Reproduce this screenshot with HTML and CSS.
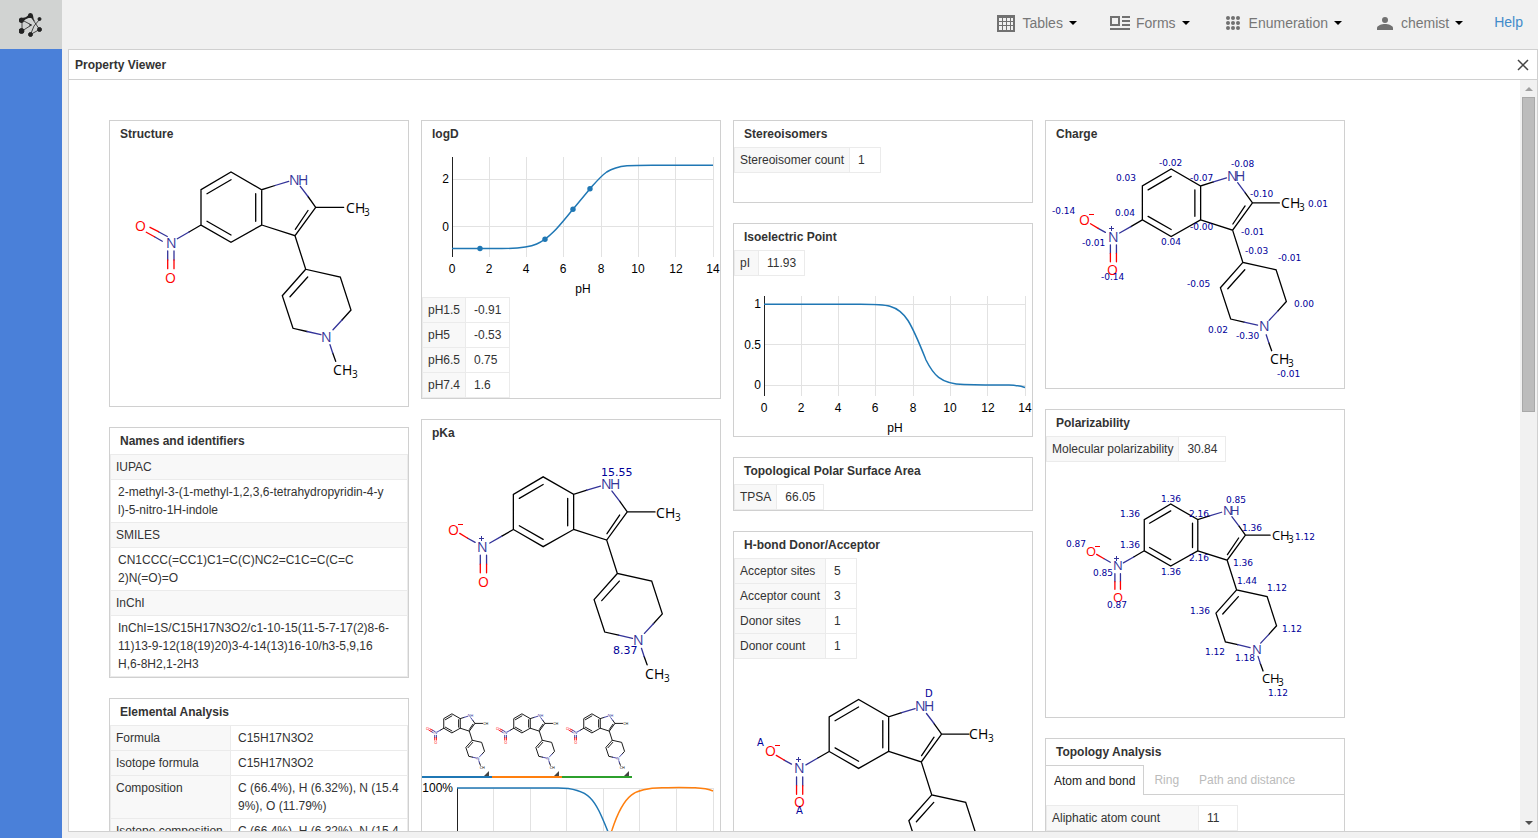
FILE: index.html
```html
<!DOCTYPE html>
<html lang="en">

<head>
    <meta charset="UTF-8">
    <meta name="viewport" content="width=device-width, initial-scale=1.0">
    <title>Property Viewer</title>
    <link rel="stylesheet" href="styles.css">
</head>

<body>
    <!-- shared molecule bonds -->
    <svg class="defs" width="0" height="0" aria-hidden="true">
        <defs>
            <g id="rings">
                <path class="bond" d="M165 38.5L151.700 42.700L121 25L91 42.700V78L121 95.300L151.700 78V42.700M121 32.700L97 46.700M97 74.300L121 88M145.700 46.700V74.300M151.700 78L185 88.700L205.700 60.300H233.700M205.700 60.300L198 49.500M185.300 82.300L198 63.500M185 88.700L195.700 122.300L230.300 130L241 163L232 173M195.700 122.300L172.300 148.700L183 181.300L197 184.500M197.700 130L180 149.700M222.700 206L225.700 214.300M91 78L79 85" />
                <path class="bond blue" d="M165 38.500L178.700 34.300M198 49.500L190.300 39.300M232 173L223 182.700M197 184.500L211 187.700M220 197.700L222.700 206M79 85L67.300 91.700" />
                <path class="bond blue" d="M57.700 104V113M64 104V113" />
                <path class="bond red" d="M57.700 113V121.700M64 113V121.700" />
            </g>
            <g id="oxo">
                <path class="bond blue" d="M48.500 84.700L57.300 89.500M44.500 89.800L52.300 94.300" />
                <path class="bond red" d="M40 80.300L48.500 84.700M36.300 85.300L44.500 89.800" />
            </g>
            <g id="oxide">
                <path class="bond blue" d="M45 86.800L52.500 91" />
                <path class="bond red" d="M37 82L45 86.800" />
            </g>
            <g id="small">
                <use href="#rings" />
                <use href="#oxo" />
                <g class="atom">
                    <text class="blue" x="179" y="38">NH</text>
                    <text x="236" y="66">CH</text>
                    <text class="red" x="26" y="84">O</text>
                    <text class="blue" x="56" y="101">N</text>
                    <text class="red" x="56" y="136">O</text>
                    <text class="blue" x="211" y="195">N</text>
                    <text x="223" y="228">CH</text>
                </g>
            </g>
        </defs>
    </svg>

    <div class="app">
        <aside class="sidebar">
            <a class="logo" href="#">
                <svg width="24" height="24" viewBox="0 0 24 24" fill="#222" stroke="#222">
                    <path fill="none" stroke-width="0.8" d="M3 7L11.500 3L20.500 16.500L11.500 21.500M20.500 6.500L15 13L11.500 21.500M3 7L12.500 12L3 18V7" />
                    <path stroke="none" d="M9 2.500a2.500 2.500 0 0 1 5 0q0 3 2.500 6.500l-4-4L9.500 5Q6 6 5.200 7.500A2.700 2.700 0 1 1 2.500 4.500Q6 5.500 9 2.500zM9.500 10.500L13 12l-3.500 1.500 1.500-1.500z" />
                    <circle cx="2.500" cy="18" r="2.500" /><circle cx="20.500" cy="6" r="1.500" /><circle cx="20.500" cy="16.500" r="2" /><circle cx="11.500" cy="21.500" r="2" />
                </svg>
            </a>
        </aside>

        <div class="content">
            <nav class="topbar">
                <button class="menu" type="button">
                    <svg class="icon" viewBox="0 0 24 24"><path fill-rule="evenodd" d="M3 4h18v17H3zM5 7v3h3V7zM9 7v3h3V7zM13 7v3h3V7zM17 7v3h2V7zM5 11v3h3v-3zM9 11v3h3v-3zM13 11v3h3v-3zM17 11v3h2v-3zM5 15v4h3v-4zM9 15v4h3v-4zM13 15v4h3v-4zM17 15v4h2v-4z" /></svg>
                    <span>Tables</span><i class="caret"></i>
                </button>
                <button class="menu" type="button">
                    <svg class="icon" viewBox="0 0 24 24"><path fill-rule="evenodd" d="M2 5h10v10H2zM4 7v6h6V7zM14 5h8v2h-8zM14 9h8v2h-8zM14 13h8v2h-8zM2 17h20v2H2z" /></svg>
                    <span>Forms</span><i class="caret"></i>
                </button>
                <button class="menu" type="button">
                    <svg class="icon" viewBox="0 0 24 24">
                        <circle cx="7" cy="7" r="2" /><circle cx="12" cy="7" r="2" /><circle cx="17" cy="7" r="2" />
                        <circle cx="7" cy="12" r="2" /><circle cx="12" cy="12" r="2" /><circle cx="17" cy="12" r="2" />
                        <circle cx="7" cy="17" r="2" /><circle cx="12" cy="17" r="2" /><circle cx="17" cy="17" r="2" />
                    </svg>
                    <span>Enumeration</span><i class="caret"></i>
                </button>
                <button class="menu" type="button">
                    <svg class="icon" viewBox="0 0 24 24"><circle cx="12" cy="9" r="3" /><path d="M4 19v-2c0-2.500 5-4 8-4s8 1.500 8 4v2z" /></svg>
                    <span>chemist</span><i class="caret"></i>
                </button>
                <a class="help" href="#">Help</a>
            </nav>

            <main class="panel">
                <header class="panel-head">
                    <h1>Property Viewer</h1>
                    <button class="close" type="button">
                        <svg width="12" height="12" viewBox="0 0 12 12"><path d="M1 1L11 11M11 1L1 11" /></svg>
                    </button>
                </header>
                <div class="panel-body">
                    <div class="columns">

                        <div class="column">
                            <section class="card">
                                <h2>Structure</h2>
                                <svg class="drawing" height="259">
                                    <use href="#rings" />
                                    <use href="#oxo" />
                                    <g class="atom">
                                        <text class="blue" y="38"><tspan x="179">N</tspan><tspan x="188">H</tspan></text>
                                        <text y="66"><tspan x="236">C</tspan><tspan x="245">H</tspan><tspan class="sub" x="254" y="69">3</tspan></text>
                                        <text class="red" x="25" y="84">O</text>
                                        <text class="blue" x="56" y="101">N</text>
                                        <text class="red" x="55" y="136">O</text>
                                        <text class="blue" x="211" y="195">N</text>
                                        <text y="228"><tspan x="223">C</tspan><tspan x="232">H</tspan><tspan class="sub" x="242" y="231">3</tspan></text>
                                    </g>
                                </svg>
                            </section>

                            <section class="card">
                                <h2>Names and identifiers</h2>
                                <table class="wide">
                                    <tr><th>IUPAC</th></tr>
                                    <tr><td>2-methyl-3-(1-methyl-1,2,3,6-tetrahydropyridin-4-y<br>l)-5-nitro-1H-indole</td></tr>
                                    <tr><th>SMILES</th></tr>
                                    <tr><td>CN1CCC(=CC1)C1=C(C)NC2=C1C=C(C=C<br>2)N(=O)=O</td></tr>
                                    <tr><th>InChI</th></tr>
                                    <tr><td>InChI=1S/C15H17N3O2/c1-10-15(11-5-7-17(2)8-6-<br>11)13-9-12(18(19)20)3-4-14(13)16-10/h3-5,9,16<br>H,6-8H2,1-2H3</td></tr>
                                </table>
                            </section>

                            <section class="card">
                                <h2>Elemental Analysis</h2>
                                <table class="wide">
                                    <tr><th class="name">Formula</th><td>C15H17N3O2</td></tr>
                                    <tr><th class="name">Isotope formula</th><td>C15H17N3O2</td></tr>
                                    <tr><th class="name">Composition</th><td>C (66.4%), H (6.32%), N (15.4<br>9%), O (11.79%)</td></tr>
                                    <tr><th class="name">Isotope composition</th><td>C (66.4%), H (6.32%), N (15.4<br>9%), O (11.79%)</td></tr>
                                </table>
                            </section>
                        </div>

                        <div class="column">
                            <section class="card">
                                <h2>logD</h2>
                                <svg class="drawing chart" height="150">
                                    <path class="grid" d="M67.500 10V110M104.500 10V110M141.500 10V110M179.500 10V110M216.500 10V110M253.500 10V110M291.500 10V110M30 32.500H291M30 79.500H291" />
                                    <path class="axis" d="M30.500 10V110" />
                                    <path class="line" d="M30 101.500H80C95 101.500 106 101 114.700 97C129 91 141 74 151 62.300L168 41.700C174 35 179 29 184.700 25C191 21 198 19.500 205 18.800C212 18.300 220 18.300 230 18.300H291" />
                                    <g class="dots"><circle cx="58" cy="101.500" r="2.700" /><circle cx="123" cy="92.300" r="2.700" /><circle cx="151" cy="62.300" r="2.700" /><circle cx="168" cy="41.700" r="2.700" /></g>
                                    <g class="ylabels"><text x="27" y="36">2</text><text x="27" y="84">0</text></g>
                                    <g class="xlabels">
                                        <text x="30" y="126">0</text><text x="67" y="126">2</text><text x="104" y="126">4</text><text x="141" y="126">6</text><text x="179" y="126">8</text><text x="216" y="126">10</text><text x="254" y="126">12</text><text x="291" y="126">14</text>
                                        <text x="161" y="146">pH</text>
                                    </g>
                                </svg>
                                <table>
                                    <tr><th>pH1.5</th><td>-0.91</td></tr>
                                    <tr><th>pH5</th><td>-0.53</td></tr>
                                    <tr><th>pH6.5</th><td>0.75</td></tr>
                                    <tr><th>pH7.4</th><td>1.6</td></tr>
                                </table>
                            </section>

                            <section class="card">
                                <h2>pKa</h2>
                                <svg class="drawing" height="254">
                                    <g transform="translate(1 6) scale(.993)"><use href="#rings" /><use href="#oxide" /></g>
                                    <g class="atom">
                                        <text class="blue" y="43"><tspan x="179">N</tspan><tspan x="188">H</tspan></text>
                                        <text y="72"><tspan x="234">C</tspan><tspan x="243">H</tspan><tspan class="sub" x="253" y="75">3</tspan></text>
                                        <text class="red" x="26" y="89">O</text>
                                        <text class="blue" x="55" y="106">N</text>
                                        <text class="red" x="56" y="141">O</text>
                                        <text class="blue" x="211" y="199">N</text>
                                        <text y="233"><tspan x="223">C</tspan><tspan x="232">H</tspan><tspan class="sub" x="242" y="236">3</tspan></text>
                                    </g>
                                    <path class="sign red" d="M36 78.500H41" />
                                    <path class="sign blue" d="M57 92.500H62M59.500 90V95" />
                                    <g class="value large"><text x="179" y="30">15.55</text><text x="191" y="208">8.37</text></g>
                                </svg>
                                <ul class="species">
                                    <li class="s-blue"><svg width="70" height="76"><use href="#small" transform="translate(-3 7) scale(.272)" /><path class="corner" d="M67 71V76H62z" /></svg></li>
                                    <li class="s-orange"><svg width="70" height="76"><use href="#small" transform="translate(-3 7) scale(.272)" /><path class="corner" d="M67 71V76H62z" /></svg></li>
                                    <li class="s-green"><svg width="70" height="76"><use href="#small" transform="translate(-3 7) scale(.272)" /><path class="corner" d="M67 71V76H62z" /></svg></li>
                                </ul>
                                <svg class="drawing chart" height="120">
                                    <path class="grid" d="M71.500 10V110M108.500 10V110M144.500 10V110M181.500 10V110M217.500 10V110M254.500 10V110M291.500 10V110M35 10.500H291" />
                                    <path class="axis" d="M35.500 10V110" />
                                    <path class="line" d="M35 10H136C168 10 173 22 185.300 52C192 72 198 108 215 109H291" />
                                    <path class="line orange" d="M35 109H150C175 109 180 75 190 52C202 15 213 10 240 9.700C265 9.500 281 9 291 13" />
                                    <g class="ylabels"><text x="31" y="14">100%</text></g>
                                </svg>
                            </section>
                        </div>

                        <div class="column">
                            <section class="card spare">
                                <h2>Stereoisomers</h2>
                                <table>
                                    <tr><th>Stereoisomer count</th><td>1</td></tr>
                                </table>
                            </section>

                            <section class="card">
                                <h2>Isoelectric Point</h2>
                                <table>
                                    <tr><th>pI</th><td>11.93</td></tr>
                                </table>
                                <svg class="drawing chart" height="160">
                                    <path class="grid" d="M67.500 20V120M104.500 20V120M141.500 20V120M179.500 20V120M216.500 20V120M253.500 20V120M291.500 20V120M30 28.500H291M30 68.500H291M30 109.500H291" />
                                    <path class="axis" d="M30.500 20V120" />
                                    <path class="line" d="M30 28.300H125C152 28.300 163 28 174 44.500C181 56 186 69 192 84C199 98 206 108 230 108.500C250 109 265 109 275 109C284 109.500 288 110.500 291 111.500" />
                                    <g class="ylabels"><text x="27" y="32">1</text><text x="27" y="73">0.5</text><text x="27" y="113">0</text></g>
                                    <g class="xlabels">
                                        <text x="30" y="136">0</text><text x="67" y="136">2</text><text x="104" y="136">4</text><text x="141" y="136">6</text><text x="179" y="136">8</text><text x="216" y="136">10</text><text x="254" y="136">12</text><text x="291" y="136">14</text>
                                        <text x="161" y="156">pH</text>
                                    </g>
                                </svg>
                            </section>

                            <section class="card">
                                <h2>Topological Polar Surface Area</h2>
                                <table>
                                    <tr><th>TPSA</th><td>66.05</td></tr>
                                </table>
                            </section>

                            <section class="card">
                                <h2>H-bond Donor/Acceptor</h2>
                                <table>
                                    <tr><th>Acceptor sites</th><td>5</td></tr>
                                    <tr><th>Acceptor count</th><td>3</td></tr>
                                    <tr><th>Donor sites</th><td>1</td></tr>
                                    <tr><th>Donor count</th><td>1</td></tr>
                                </table>
                                <svg class="drawing" height="270">
                                    <g transform="translate(6 16) scale(.98)"><use href="#rings" /><use href="#oxide" /></g>
                                    <g class="atom">
                                        <text class="blue" y="52"><tspan x="181">N</tspan><tspan x="190">H</tspan></text>
                                        <text y="80"><tspan x="235">C</tspan><tspan x="244">H</tspan><tspan class="sub" x="254" y="83">3</tspan></text>
                                        <text class="red" x="31" y="97">O</text>
                                        <text class="blue" x="60" y="114">N</text>
                                        <text class="red" x="60" y="148">O</text>
                                        <text class="blue" x="213" y="206">N</text>
                                        <text y="239"><tspan x="225">C</tspan><tspan x="234">H</tspan><tspan class="sub" x="244" y="242">3</tspan></text>
                                    </g>
                                    <path class="sign red" d="M41 86.500H46" />
                                    <path class="sign blue" d="M62 100.500H67M64.500 98V103" />
                                    <g class="value letter"><text x="191" y="38">D</text><text x="23" y="87">A</text><text x="62" y="155">A</text></g>
                                </svg>
                            </section>
                        </div>

                        <div class="column">
                            <section class="card">
                                <h2>Charge</h2>
                                <svg class="drawing" height="241">
                                    <g transform="translate(9 -2) scale(.96)"><use href="#rings" /><use href="#oxide" /></g>
                                    <g class="atom">
                                        <text class="blue" y="34"><tspan x="181">N</tspan><tspan x="189">H</tspan></text>
                                        <text y="61"><tspan x="235">C</tspan><tspan x="244">H</tspan><tspan class="sub" x="253" y="64">3</tspan></text>
                                        <text class="red" x="33" y="78">O</text>
                                        <text class="blue" x="62" y="95">N</text>
                                        <text class="red" x="61" y="128">O</text>
                                        <text class="blue" x="213" y="184">N</text>
                                        <text y="217"><tspan x="224">C</tspan><tspan x="233">H</tspan><tspan class="sub" x="242" y="220">3</tspan></text>
                                    </g>
                                    <path class="sign red" d="M43 67.500H48" />
                                    <path class="sign blue" d="M63 81.500H68M65.500 79V84" />
                                    <g class="value">
                                        <text x="113" y="19">-0.02</text><text x="185" y="20">-0.08</text><text x="70" y="34">0.03</text><text x="144" y="34">-0.07</text>
                                        <text x="204" y="50">-0.10</text><text x="262" y="60">0.01</text><text x="6" y="67">-0.14</text><text x="69" y="69">0.04</text>
                                        <text x="144" y="83">-0.00</text><text x="195" y="88">-0.01</text><text x="115" y="98">0.04</text><text x="36" y="99">-0.01</text>
                                        <text x="199" y="107">-0.03</text><text x="232" y="114">-0.01</text><text x="55" y="133">-0.14</text><text x="141" y="140">-0.05</text>
                                        <text x="248" y="160">0.00</text><text x="162" y="186">0.02</text><text x="190" y="192">-0.30</text><text x="231" y="230">-0.01</text>
                                    </g>
                                </svg>
                            </section>

                            <section class="card">
                                <h2>Polarizability</h2>
                                <table>
                                    <tr><th>Molecular polarizability</th><td>30.84</td></tr>
                                </table>
                                <svg class="drawing" height="255">
                                    <g transform="translate(18 20) scale(.882)"><use href="#rings" /><use href="#oxide" /></g>
                                    <g class="atom compact">
                                        <text class="blue" y="53"><tspan x="177">N</tspan><tspan x="184">H</tspan></text>
                                        <text y="78"><tspan x="226">C</tspan><tspan x="234">H</tspan><tspan class="sub" x="242" y="81">3</tspan></text>
                                        <text class="red" x="40" y="94">O</text>
                                        <text class="blue" x="67" y="108">N</text>
                                        <text class="red" x="67" y="140">O</text>
                                        <text class="blue" x="206" y="192">N</text>
                                        <text y="221"><tspan x="216">C</tspan><tspan x="224">H</tspan><tspan class="sub" x="232" y="224">3</tspan></text>
                                    </g>
                                    <path class="sign red" d="M49 84.500H54" />
                                    <path class="sign blue" d="M68 96.500H73M70.500 94V99" />
                                    <g class="value">
                                        <text x="115" y="40">1.36</text><text x="180" y="41">0.85</text><text x="74" y="55">1.36</text><text x="143" y="55">2.16</text>
                                        <text x="196" y="69">1.36</text><text x="249" y="78">1.12</text><text x="20" y="85">0.87</text><text x="74" y="86">1.36</text>
                                        <text x="143" y="99">2.16</text><text x="187" y="104">1.36</text><text x="115" y="113">1.36</text><text x="47" y="114">0.85</text>
                                        <text x="191" y="122">1.44</text><text x="221" y="129">1.12</text><text x="61" y="146">0.87</text><text x="144" y="152">1.36</text>
                                        <text x="236" y="170">1.12</text><text x="159" y="193">1.12</text><text x="189" y="199">1.18</text><text x="222" y="234">1.12</text>
                                    </g>
                                </svg>
                            </section>

                            <section class="card">
                                <h2>Topology Analysis</h2>
                                <div class="tabs">
                                    <button class="tab active" type="button">Atom and bond</button>
                                    <button class="tab" type="button">Ring</button>
                                    <button class="tab" type="button">Path and distance</button>
                                </div>
                                <table class="topology">
                                    <tr><th>Aliphatic atom count</th><td>11</td></tr>
                                </table>
                            </section>
                        </div>

                    </div>
                    <div class="scrollbar">
                        <i class="up"></i>
                        <div class="track"><div class="thumb"></div></div>
                        <i class="down"></i>
                    </div>
                </div>
            </main>
        </div>
    </div>
</body>

</html>
```
FILE: styles.css
```css
html,
body,
h1,
h2,
ul {
    padding: 0;
    margin: 0;
}

* {
    box-sizing: border-box;
}

body {
    font-family: "Liberation Sans", Arial, sans-serif;
    font-size: 12px;
    line-height: 18px;
    color: #333;
    background-color: #f1f1f1;
    overflow: hidden;
}

button {
    font: inherit;
    color: inherit;
    background: none;
    border: none;
    padding: 0;
    cursor: pointer;
}

svg {
    display: block;
}

.defs {
    position: absolute;
}

.app {
    display: flex;
    height: 100vh;
}

.sidebar {
    flex: 0 0 62px;
    background-color: #4a80d9;
}

.logo {
    display: flex;
    align-items: center;
    justify-content: center;
    height: 49px;
    background-color: #d1d3d2;
}

.content {
    flex: 1;
    min-width: 0;
    display: flex;
    flex-direction: column;
    padding: 0 0 6px 6px;
}

/* top menu */
.topbar {
    flex: 0 0 49px;
    display: flex;
    align-items: center;
    justify-content: flex-end;
    gap: 31px;
    padding: 0 15px 3px 0;
    font-size: 14px;
    color: #777;
}

.menu {
    display: flex;
    align-items: center;
}

.icon {
    width: 24px;
    height: 24px;
    margin-right: 4px;
    fill: #717171;
}

.caret {
    margin-left: 6px;
    border: 4px solid transparent;
    border-top-color: #000;
    border-bottom: 0;
}

.help {
    color: #428bca;
    text-decoration: none;
    padding-bottom: 2px;
}

/* panel */
.panel {
    flex: 1;
    min-height: 0;
    display: flex;
    flex-direction: column;
    background-color: #fff;
    border: 1px solid #d0d0d0;
}

.panel-head {
    flex: 0 0 30px;
    display: flex;
    align-items: center;
    justify-content: space-between;
    padding: 0 8px 0 6px;
    border-bottom: 1px solid #d0d0d0;
}

.panel-head h1 {
    font-size: 12px;
}

.close path {
    stroke: #444;
    stroke-width: 1.5;
}

.panel-body {
    flex: 1;
    min-height: 0;
    display: flex;
}

.columns {
    flex: 1;
    display: flex;
    align-items: flex-start;
    gap: 12px;
    padding: 40px;
    overflow: hidden;
}

.column {
    flex: 0 0 300px;
    display: flex;
    flex-direction: column;
    gap: 20px;
}

/* cards */
.card {
    border: 1px solid #d0d0d0;
}

.card.spare {
    padding-bottom: 29px;
}

.card h2 {
    font-size: 12px;
    line-height: 26px;
    padding-left: 10px;
}

table {
    border-collapse: collapse;
}

table.wide {
    width: 100%;
}

th,
td {
    border: 1px solid #ebebeb;
    padding: 3px 5px;
    text-align: left;
    vertical-align: top;
    white-space: nowrap;
    font-weight: normal;
}

th {
    min-width: 24px;
    background-color: #f8f8f8;
}

td {
    min-width: 31px;
    padding: 3px 8px;
}

.wide td {
    padding: 3px 7px;
}

th.name {
    width: 120px;
}

.topology {
    margin-top: 10px;
}

.topology th {
    width: 152px;
}

.topology td {
    width: 39px;
}

/* tabs */
.tabs {
    display: flex;
    height: 30px;
    border-bottom: 1px solid #d0d0d0;
}

.tab {
    padding: 0 10px;
    color: #bbb;
}

.tab.active {
    margin-bottom: -1px;
    padding: 0 8px;
    color: #222;
    background-color: #fff;
    border: 1px solid #d0d0d0;
    border-width: 1px 1px 0 0;
}

/* molecules */
.drawing {
    width: 100%;
    overflow: visible;
}

.bond,
.sign {
    fill: none;
    stroke: #000;
    stroke-width: 1;
}

.bond {
    stroke-width: var(--bond-width, 1.3);
    stroke-linecap: round;
    vector-effect: non-scaling-stroke;
}

.bond.blue,
.sign.blue {
    stroke: #339;
}

.bond.red,
.sign.red {
    stroke: #f00;
}

.atom {
    font-family: "Open Sans", sans-serif;
    font-size: 14px;
}

.atom.compact {
    font-size: 13px;
}

.atom .sub {
    font-size: 10px;
}

.atom .blue {
    fill: #339;
}

.atom .red {
    fill: #f00;
}

.value {
    font-family: "DejaVu Sans", sans-serif;
    font-size: 9px;
    fill: #000099;
}

.value.letter {
    font-size: 10px;
}

.value.large {
    font-size: 11px;
}

.species {
    --bond-width: 0.9;
    display: flex;
    list-style: none;
}

.species li {
    border-bottom: 2px solid #1f77b4;
}

.species .s-orange {
    border-color: #ff7f0e;
}

.species .s-green {
    border-color: #2ca02c;
}

.corner {
    fill: #444;
}

/* charts */
.chart {
    font-size: 12px;
    fill: #000;
}

.chart path {
    fill: none;
}

.grid {
    stroke: #e2e2e2;
}

.axis {
    stroke: #222;
}

.line {
    stroke: #1f77b4;
    stroke-width: 1.5;
}

.line.orange {
    stroke: #ff7f0e;
}

.dots {
    fill: #1f77b4;
}

.ylabels {
    text-anchor: end;
}

.xlabels {
    text-anchor: middle;
}

/* scrollbar */
.scrollbar {
    flex: 0 0 17px;
    display: flex;
    flex-direction: column;
    align-items: center;
    background-color: #f1f1f1;
}

.track {
    flex: 1;
    width: 13px;
}

.thumb {
    height: 44%;
    background-color: #bcbcbc;
    border: 1px solid #a8a8a8;
}

.up,
.down {
    margin: 7px 0 6px;
    border: 4px solid transparent;
}

.up {
    border-top: 0;
    border-bottom-color: #a0a0a0;
}

.down {
    border-bottom: 0;
    border-top-color: #505050;
}
```
